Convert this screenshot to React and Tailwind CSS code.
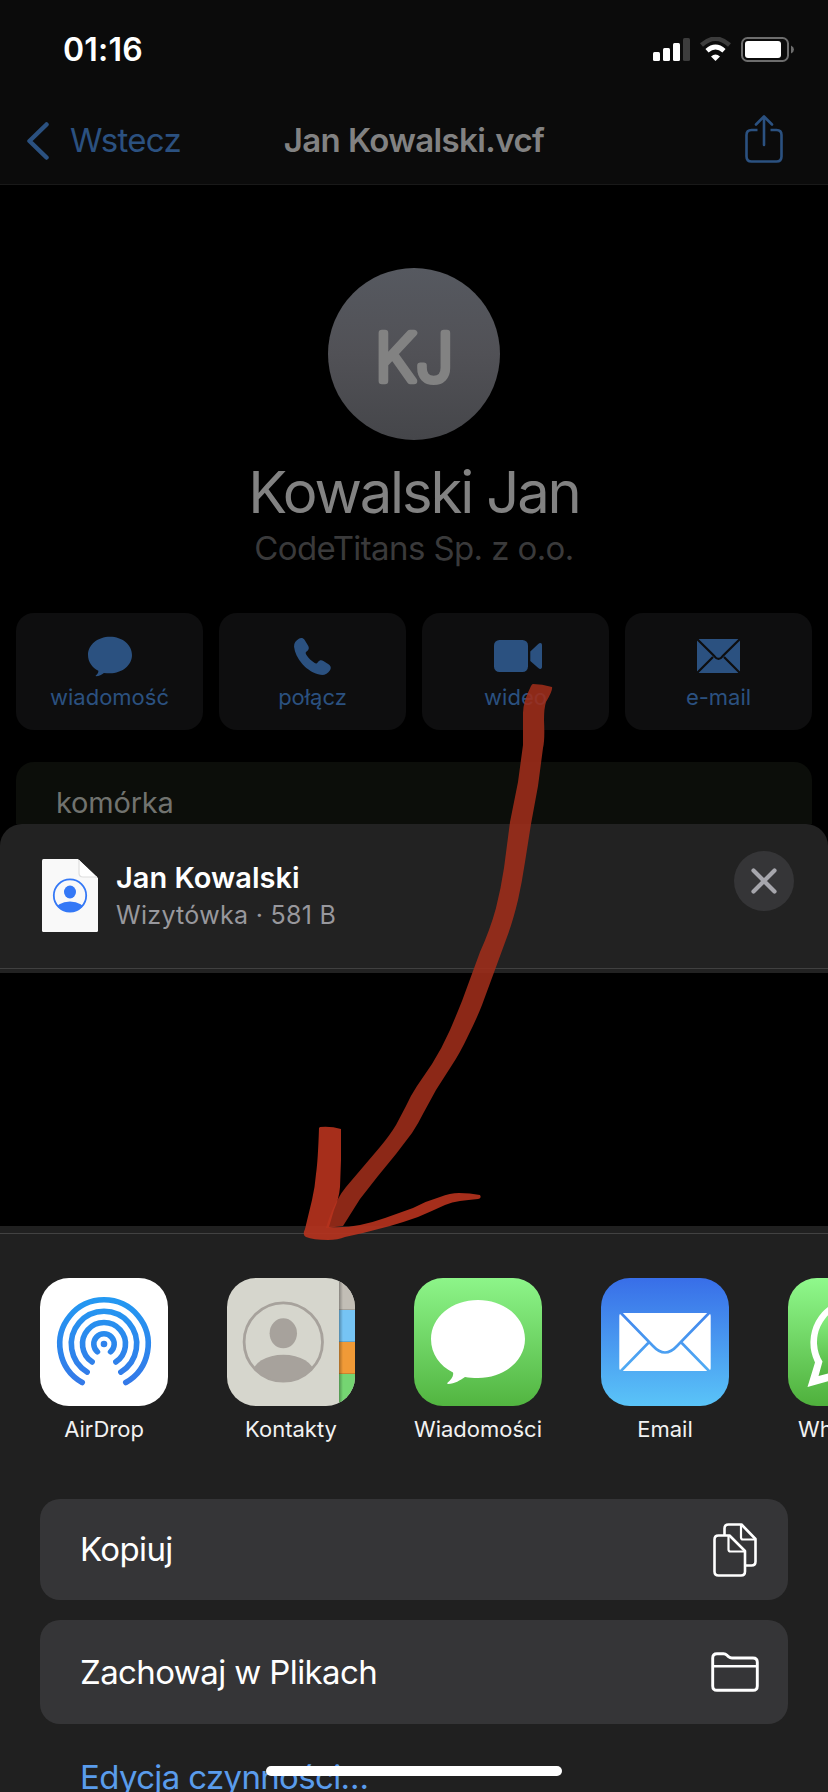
const Bubble = ({ className }) => (
  <svg viewBox="0 0 94 84" className={className} fill="currentColor">
    <path d="M47 0C73 0 94 17 94 39S73 78 47 78C42 78 38 77.600 34 77C29 80.500 24 83.500 17 84C16.300 84 16 83.300 16.500 82.800C20 79.500 23 76 22 72.500C9 66 0 54 0 39C0 17 21 0 47 0Z" />
  </svg>
);

const Phone = () => (
  <svg viewBox="0 0 37 37" className="w-[37px] h-[37px]" fill="currentColor">
    <path d="M4.500 1C6.500 -.3 9 -.3 10.500 1.700L14 7.500C15.300 9.600 15 11.500 13.300 12.900C11.400 14.300 11.300 15 12.300 16.700C14.500 20 17.500 23 20.700 25C22 25.800 22.700 25.700 24 23.900C25.400 22 27.400 21.600 29.400 22.900L34.500 26.300C37 28 37.300 30 36 32.200C33.800 35.700 30.500 37.300 26.500 36.800C20.500 36 13 31.500 8.300 26C3.500 20.500 .7 14.500 .1 9C-.2 5.500 1.500 2.900 4.500 1Z" />
  </svg>
);

const Video = () => (
  <svg viewBox="0 0 48 32" className="ml-[5px] w-[48px] h-[32px]" fill="currentColor">
    <rect width="34" height="32" rx="5.500" />
    <path d="M36.300 11.500L44 4.300C46 2.500 48 2.700 48 5.200V26.800C48 29.300 46 29.500 44 27.700L36.300 21Z" />
  </svg>
);

const Mail = () => (
  <svg viewBox="0 0 43 34" className="w-[43px] h-[34px]">
    <rect width="43" height="34" rx="2.500" fill="currentColor" />
    <path d="M0 0L17.500 17.300Q21.500 22.500 25.500 17.300L43 0M0 34L16 18M43 34L27 18" stroke="#0e0e0f" strokeWidth="2.200" fill="none" />
  </svg>
);

const actions = [
  { label: "wiadomość", icon: <Bubble className="w-[44px] h-[41px]" /> },
  { label: "połącz", icon: <Phone /> },
  { label: "wideo", icon: <Video /> },
  { label: "e-mail", icon: <Mail /> },
];

const StatusIcons = () => (
  <svg viewBox="0 0 142 26" className="w-[142px] h-[26px]" fill="#fff">
    <rect x="0" y="15" width="7" height="9" rx="1.500" />
    <rect x="10" y="11" width="7" height="13" rx="1.500" />
    <rect x="20" y="6" width="7" height="18" rx="1.500" />
    <rect x="30" y="1" width="7" height="23" rx="1.500" fill="#3c3c3c" />
    <path d="M48.500 8Q62.500 -4.500 76.500 8" stroke="#3c3c3c" strokeWidth="4.500" fill="none" />
    <path d="M54 13.700Q62.500 6.300 71 13.700" stroke="#fff" strokeWidth="4.800" fill="none" />
    <path d="M58 19.500Q62.500 15.500 67 19.500L62.500 24Z" />
    <rect x="89" y="1" width="46" height="23" rx="5.500" fill="none" stroke="#6d6d6d" strokeWidth="2" />
    <rect x="92" y="4" width="36" height="17" rx="3" />
    <path d="M138 8.500Q141 10 141 12.500T138 16.500Z" fill="#6d6d6d" />
  </svg>
);

const ShareIcon = () => (
  <svg viewBox="0 0 38 48" className="mb-[3px] w-[38px] h-[48px]" fill="none" stroke="#2b5180" strokeWidth="2.600" strokeLinecap="round" strokeLinejoin="round">
    <path d="M12.500 15H6.500Q1.500 15 1.500 20V41.500Q1.500 46.500 6.500 46.500H31.500Q36.500 46.500 36.500 41.500V20Q36.500 15 31.500 15H25.500" strokeLinecap="butt" />
    <path d="M19 30V2M11 9.500L19 1.500L27 9.500" />
  </svg>
);

const VCard = () => (
  <svg viewBox="0 0 56 73" className="w-[56px] h-[73px]">
    <path d="M1.500 0H36L56 19V71.500Q56 73 54.500 73H1.500Q0 73 0 71.500V1.500Q0 0 1.500 0Z" fill="#f9f9f9" />
    <path d="M37 1V14Q37 18 41 18H55" fill="#fff" stroke="#dedede" strokeWidth="1.200" />
    <clipPath id="vc"><circle cx="28" cy="36.500" r="16.500" /></clipPath>
    <circle cx="28" cy="36.500" r="16.200" fill="none" stroke="#3478f6" strokeWidth="1.800" />
    <ellipse cx="28" cy="33" rx="6" ry="6.500" fill="#3478f6" />
    <ellipse cx="28" cy="52" rx="15" ry="9.500" fill="#3478f6" clipPath="url(#vc)" />
  </svg>
);

const arc = (r, deg) => {
  const a = (deg * Math.PI) / 180;
  const dx = r * Math.sin(a);
  const dy = r * Math.cos(a);
  return `M${64 - dx} ${66 + dy}A${r} ${r} 0 1 1 ${64 + dx} ${66 + dy}`;
};

const AirDrop = () => (
  <svg viewBox="0 0 128 128" className="size-full" fill="none">
    <defs>
      <linearGradient id="ad" gradientUnits="userSpaceOnUse" x1="0" y1="19" x2="0" y2="108">
        <stop stopColor="#2399f2" /><stop offset="1" stopColor="#3478e8" />
      </linearGradient>
    </defs>
    <rect width="128" height="128" fill="#fff" />
    <g stroke="url(#ad)" strokeWidth="5.600" strokeLinecap="round">
      <path d={arc(44.2, 29.5)} /><path d={arc(32.700, 31)} /><path d={arc(21.500, 33.500)} /><path d={arc(10.200, 40)} />
    </g>
    <circle cx="64" cy="66" r="3.300" fill="#2f82ec" />
  </svg>
);

const Contacts = () => (
  <svg viewBox="0 0 128 128" className="size-full">
    <defs>
      <clipPath id="cc"><circle cx="56.300" cy="64" r="39" /></clipPath>
      <linearGradient id="edge"><stop stopColor="#000" stopOpacity=".3" /><stop offset="1" stopColor="#000" stopOpacity="0" /></linearGradient>
    </defs>
    <rect width="128" height="128" fill="#d6d6cd" />
    <rect x="112" width="16" height="32" fill="#c2beb6" />
    <rect x="112" y="32" width="16" height="32" fill="#76c4f4" />
    <rect x="112" y="64" width="16" height="32" fill="#f09a37" />
    <rect x="112" y="96" width="16" height="32" fill="#75d572" />
    <path d="M112 31.500H128M112 63.500H128M112 95.500H128" stroke="#000" strokeOpacity=".15" />
    <rect x="112" width="4" height="128" fill="url(#edge)" />
    <circle cx="56.300" cy="64" r="39.200" fill="none" stroke="#a7a29c" strokeWidth="2.800" />
    <ellipse cx="56.300" cy="55.300" rx="13.700" ry="15" fill="#a7a29c" />
    <ellipse cx="56.300" cy="96" rx="31" ry="19.300" fill="#a7a29c" clipPath="url(#cc)" />
  </svg>
);

const Messages = () => (
  <div className="flex size-full items-start justify-center bg-linear-to-b from-[#8df589] to-[#52b540] pt-[22px] text-white">
    <Bubble className="w-[94px] h-[84px]" />
  </div>
);

const Email = () => (
  <svg viewBox="0 0 128 128" className="size-full">
    <defs>
      <linearGradient id="em" gradientUnits="userSpaceOnUse" x1="0" y1="0" x2="0" y2="128">
        <stop stopColor="#386ee8" /><stop offset="1" stopColor="#5ac4f8" />
      </linearGradient>
    </defs>
    <rect width="128" height="128" fill="url(#em)" />
    <rect x="18.300" y="35" width="91.400" height="58" rx="3" fill="#fff" />
    <path d="M18 33L52 68Q64 81 76 68L110 33M18 95L47.700 64.500M110 95L80.300 64.500" fill="none" stroke="url(#em)" strokeWidth="2.600" />
  </svg>
);

const WhatsApp = () => (
  <svg viewBox="0 0 128 128" className="size-full">
    <defs><linearGradient id="wa" x2="0" y2="1"><stop stopColor="#90f98c" /><stop offset="1" stopColor="#4fb03c" /></linearGradient></defs>
    <rect width="128" height="128" fill="url(#wa)" />
    <path d="M19.500 109L27 84.500A45 45 0 1 1 43 102.500Z" fill="#fff" />
    <path d="M30.500 98L34.500 83.500A37.500 37.500 0 1 1 44.500 94.300Z" fill="url(#wa)" />
  </svg>
);

const apps = [
  { label: "AirDrop", icon: <AirDrop /> },
  { label: "Kontakty", icon: <Contacts /> },
  { label: "Wiadomości", icon: <Messages /> },
  { label: "Email", icon: <Email /> },
  { label: "WhatsApp", icon: <WhatsApp /> },
];

const CopyIcon = () => (
  <svg viewBox="0 0 44 54" className="w-[44px] h-[54px]" fill="none" stroke="#fff" strokeWidth="2.600" strokeLinejoin="round">
    <path d="M11.500 12V5.500Q11.500 1.500 15.500 1.500H28.500L42.500 16V38.500Q42.500 42.500 38.500 42.500H33" />
    <path d="M28 2V14.500Q28 16.500 30 16.500H42" strokeWidth="2.200" />
    <path d="M5.500 12.500H16.500L32 28V48.500Q32 52.500 28 52.500H5.500Q1.500 52.500 1.500 48.500V16.500Q1.500 12.500 5.500 12.500Z" />
    <path d="M15.500 13V26.500Q15.500 28.500 17.500 28.500H31" strokeWidth="2.200" />
  </svg>
);

const FolderIcon = () => (
  <svg viewBox="0 0 48 40" className="w-[48px] h-[40px]" fill="none" stroke="#fff" strokeWidth="2.900" strokeLinejoin="round">
    <path d="M1.700 6Q1.700 1.700 6 1.700H12.500Q14.500 1.700 16 3.200L17.500 4.700Q19 6 21 6H42Q46.300 6 46.300 10.300V34Q46.300 38.300 42 38.300H6Q1.700 38.300 1.700 34Z" />
    <path d="M2 14.300H46" strokeWidth="2.600" />
  </svg>
);

const Arrow = () => (
  <svg viewBox="0 0 828 1792" className="pointer-events-none absolute inset-0 size-full">
    <path fill="#a12e1a" fillOpacity=".87" d="M533 684Q542 684 552 687Q553 690 546 702Q544 708 544 720Q545 740 543 748L538 786L531 824L525 862Q522 882 518 900Q513 921 507 937L496 967L482 1005Q477 1018 468 1036Q460 1053 452 1065L436 1090L424 1112Q418 1124 412 1133L396 1154L378 1176L360 1199L343 1226L326 1228Q332 1208 338 1199Q341 1193 346 1187L363 1167L380 1147Q390 1135 396 1125L406 1106Q411 1095 417 1086L432 1064Q442 1048 450 1030Q456 1016 462 1001L480 952Q490 930 496 908Q501 888 504 868L510 822L518 782L523 745Q523 735 523 713Q523 702 531 686Q532 684 533 684Z" />
    <path fill="#b8331e" fillOpacity=".9" d="M320 1127Q331 1126 341 1129V1160L340 1187Q339 1199 334 1210L329 1227Q345 1228 360 1225Q374 1222 385 1218L413 1208Q426 1201 440 1197Q450 1193 459 1193Q470 1193 480 1195Q482 1198 478 1199Q468 1200 460 1201Q452 1202 445 1205Q432 1211 418 1217Q404 1222 390 1226L363 1233L345 1237Q338 1240 328 1240Q313 1240 306 1237Q302 1235 305 1229L312 1200Q315 1187 316 1174Q318 1160 319 1128Z" />
  </svg>
);

function Row({ label, icon, className }) {
  return (
    <div className={"flex items-center justify-between rounded-[20px] bg-[#353537] pl-[40px] text-[33px] leading-none tracking-[-0.6px] text-white " + className}>
      <span>{label}</span>
      {icon}
    </div>
  );
}

export default function App() {
  return (
    <div className="relative flex h-[1792px] w-[828px] flex-col overflow-hidden bg-black font-['Inter',sans-serif] leading-none">
      <header className="h-[185px] shrink-0 border-b border-[#191919] bg-[#0b0b0b]">
        <div className="flex h-[99px] items-center justify-between pl-[63px] pr-[33px]">
          <span className="text-[32px] font-semibold tracking-[0.2px] text-white">01:16</span>
          <StatusIcons />
        </div>
        <div className="grid h-[83px] grid-cols-[1fr_auto_1fr] items-center">
          <div className="flex items-center gap-[21px] pl-[27px] text-[33px] tracking-[-0.7px] text-[#2b5180]">
            <svg viewBox="0 0 22 38" className="h-[38px] w-[22px]" fill="none" stroke="currentColor" strokeWidth="4.500" strokeLinecap="round" strokeLinejoin="round"><path d="M19.500 2.500L2.500 19L19.500 35.500" /></svg>
            <span>Wstecz</span>
          </div>
          <span className="text-[33px] font-semibold tracking-[-0.6px] text-[#828282]">Jan Kowalski.vcf</span>
          <div className="flex justify-end pr-[45px]"><ShareIcon /></div>
        </div>
      </header>

      <main className="flex h-[639px] shrink-0 flex-col items-center overflow-hidden px-4 pt-[83px]">
        <svg viewBox="0 0 172 172" className="h-[172px] w-[172px] shrink-0">
          <defs><linearGradient id="av" x2="0" y2="1"><stop stopColor="#565960" /><stop offset=".5" stopColor="#515156" /><stop offset="1" stopColor="#45464a" /></linearGradient></defs>
          <circle cx="86" cy="86" r="86" fill="url(#av)" />
          <text x="86" y="112.500" textAnchor="middle" className="font-['Inter',sans-serif] text-[66px] font-extralight" fill="#828282" stroke="#828282" strokeWidth="6.600" strokeLinejoin="round">KJ</text>
        </svg>
        <span className="mt-[23px] text-[58px] leading-[58px] tracking-[-2.15px] text-[#828282]">Kowalski Jan</span>
        <span className="mt-[10px] text-[33px] leading-[34px] tracking-[-0.6px] text-[#3a3a3b]">CodeTitans Sp. z o.o.</span>
        <div className="mt-12 grid w-full shrink-0 grid-cols-4 gap-4">
          {actions.map((a) => (
            <div key={a.label} className="flex h-[117px] flex-col items-center rounded-[18px] bg-[#0e0e0f] pt-[22px] text-[#2b5180]">
              <div className="flex h-[42px] items-center">{a.icon}</div>
              <span className="mt-[9px] text-[22px] leading-[22px]">{a.label}</span>
            </div>
          ))}
        </div>
        <div className="mt-8 h-[80px] w-full shrink-0 rounded-t-[18px] bg-[#0c0e0a] pl-[40px] pt-[26px] text-[29px] tracking-[-0.2px] text-[#71736f]">
          <span>komórka</span>
        </div>
      </main>

      <section className="flex h-[149px] shrink-0 flex-col justify-between rounded-t-[22px] bg-[#222222] pb-1">
        <div className="flex items-start pl-[42px] pr-[34px]">
          <div className="pt-[35px]"><VCard /></div>
          <div className="flex flex-col pl-[18px] pt-[39px]">
            <span className="text-[29px] font-semibold leading-[30px] text-white">Jan Kowalski</span>
            <span className="mt-[9px] text-[25px] leading-[26px] tracking-[0.3px] text-[#98989d]">Wizytówka · 581 B</span>
          </div>
          <div className="ml-auto mt-[27px] flex size-[60px] items-center justify-center rounded-full bg-[#353537]">
            <svg viewBox="0 0 26 26" className="size-[26px]" stroke="#a6a6ac" strokeWidth="4.200" strokeLinecap="round"><path d="M2.500 2.500L23.500 23.500M23.500 2.500L2.500 23.500" /></svg>
          </div>
        </div>
        <div className="h-px bg-[#404040]" />
      </section>

      <div className="h-[253px] shrink-0 bg-black" />

      <section className="flex h-[566px] shrink-0 flex-col bg-[#202020] pt-[7px]">
        <div className="h-px shrink-0 bg-[#424242]" />
        <div className="flex gap-[59px] pl-10 pt-[44px]">
          {apps.map((a) => (
            <div key={a.label} className="flex w-[128px] shrink-0 flex-col items-center">
              <div className="size-[128px] overflow-hidden rounded-[29px]">{a.icon}</div>
              <span className="mt-[12px] text-[22px] leading-[22px] text-[#f2f2f2]">{a.label}</span>
            </div>
          ))}
        </div>
        <div className="mt-[59px] flex flex-col gap-5 px-10">
          <Row label="Kopiuj" icon={<CopyIcon />} className="h-[101px] pr-[31px]" />
          <Row label="Zachowaj w Plikach" icon={<FolderIcon />} className="h-[104px] pr-[29px]" />
        </div>
        <div className="pl-[80px] pt-[36px] text-[33px] leading-[34px] tracking-[-0.65px] text-[#5a9cec]"><span>Edycja czynności…</span></div>
      </section>

      <div className="absolute bottom-4 left-[266px] h-[10px] w-[296px] rounded-full bg-white" />
      <Arrow />
    </div>
  );
}
